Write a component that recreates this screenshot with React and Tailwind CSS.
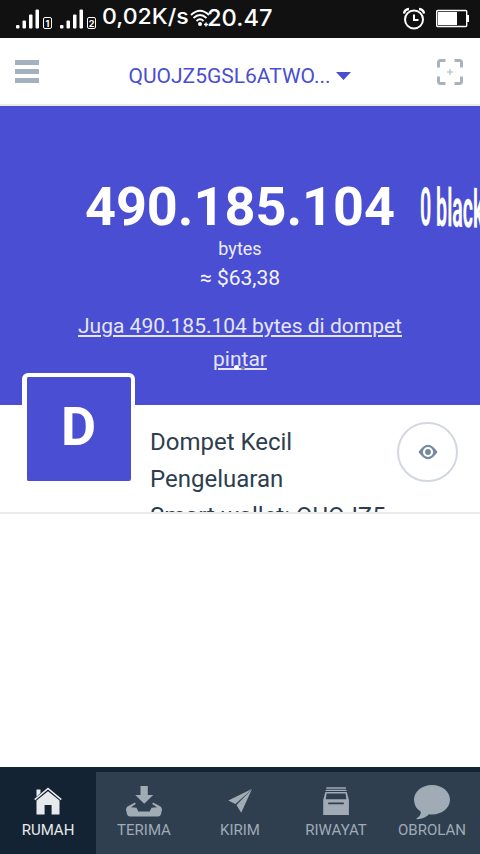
import React, { useState } from "react";

const HomeIcon = () => (
  <svg width="30" height="30" viewBox="0 0 30 30" fill="currentColor">
    <path d="M3.5 3.5h4v3.5l-4 3.8z" />
    <path d="M15 1.5 28.8 12.9 27.8 14.2 15 3.6 2.2 14.2 1.2 12.9z" />
    <path d="M15 5.2 26.5 14.6v13.9H18.6V19H11.6v9.5H3.5V14.6z" />
  </svg>
);

const ReceiveIcon = () => (
  <svg width="38" height="34" viewBox="0 0 38 34" fill="currentColor">
    <path d="M15.5 2h7.3v9h5.4L19.2 19.8 10.2 11h5.3z" />
    <path d="M10 18.6 2.5 22.5Q.9 23.8 1 26l1 4Q2.5 32.6 5 32.6H33q2.5 0 3-2.6l1-4q.1-2.2-1.5-3.5L28 18.6l-.8 1.4 4.8 3.2-5.5.5-1.8 3.8H13.3l-1.8-3.8L6 23.2 10.8 20z" />
  </svg>
);

const SendIcon = () => (
  <svg width="26" height="26" viewBox="0 0 26 26" fill="currentColor">
    <path d="M24.7 1 1.3 12.4 8.4 16.1 20.5 5.2z" />
    <path d="M24.9 1.2 9.5 17.1 14.2 24.8z" />
  </svg>
);

const HistoryIcon = () => (
  <svg width="28" height="30" viewBox="0 0 28 30" fill="currentColor">
    <path d="M4.5 1.2h19.2l.4 1.6H4.1zM3.9 3.7h20.4l.3 1.3H3.6z" />
    <path
      fillRule="evenodd"
      d="M3.4 6h21.4l2.1 8V29H1.2V14zM4.6 7.6 3.8 13.2h20.6l-.8-5.6zM6.2 16.4v1.8h15.6v-1.8z"
    />
  </svg>
);

const ChatIcon = () => (
  <svg className="mt-[2px]" width="38" height="36" viewBox="0 0 38 36" fill="currentColor">
    <path d="M19 1C29 1 37 7.5 37 15.8S29 30.5 19 30.5q-2 0-3-.2Q12 35 4 35.2 2.5 34.7 4 34q4-2.4 3.8-6.3Q1 23.5 1 15.8C1 7.5 9 1 19 1z" />
  </svg>
);

const tabs = [
  { name: "RUMAH", icon: <HomeIcon /> },
  { name: "TERIMA", icon: <ReceiveIcon /> },
  { name: "KIRIM", icon: <SendIcon /> },
  { name: "RIWAYAT", icon: <HistoryIcon /> },
  { name: "OBROLAN", icon: <ChatIcon /> },
];

const Signal = ({ sim }) => (
  <div className="flex items-end">
    <svg width="24" height="20" viewBox="0 0 24 20" fill="#fff">
      <rect x="0" y="16" width="3.5" height="3.5" rx="1" />
      <rect x="6.5" y="11.5" width="3.5" height="8" rx="1" />
      <rect x="13" y="5.5" width="3.5" height="14" rx="1" />
      <rect x="19.5" y="0.5" width="3.5" height="19" rx="1" />
    </svg>
    <span className="ml-[3px] flex h-[12px] w-[9px] items-center justify-center rounded-[2px] border border-white text-[9px] leading-none font-bold">
      {sim}
    </span>
  </div>
);

const StatusBar = () => (
  <div className="flex h-[38px] bg-[#111111] pl-4 font-[Inter,sans-serif] text-white">
    <div className="flex h-[30px] w-[86px] items-end gap-[8px] pb-[1px]">
      <Signal sim="1" />
      <Signal sim="2" />
    </div>
    <div className="h-[34px] w-[88px]">
      <span className="inline-block origin-left scale-x-[1.1] text-[21px] leading-[34px] font-medium whitespace-nowrap">
        0,02K/s
      </span>
    </div>
    <svg className="mt-[9px]" width="20" height="18" viewBox="0 0 20 18" fill="none" stroke="#fff" strokeWidth="1.8">
      <path d="M1 6Q10-2.5 19 6M3.5 9Q10 3 16.5 9M6.5 12Q10 8.5 13.5 12" />
      <circle cx="10" cy="15" r="2" fill="#fff" stroke="none" />
      <path d="M14 15.5h4M16 13.5v4" strokeWidth="1.4" />
    </svg>
    <div className="-ml-[3px] h-[36px] w-[68px]">
      <span className="inline-block origin-left scale-x-[1.03] text-[23px] leading-[36px] font-medium whitespace-nowrap">
        20.47
      </span>
    </div>
    <div className="ml-auto flex items-start pr-[10px]">
      <svg className="mt-[7px]" width="24" height="23" viewBox="0 0 24 23" fill="none" stroke="#fff" strokeWidth="2">
        <circle cx="11" cy="12.5" r="9" />
        <path d="M11 7.5v5.5h4.5" />
        <path d="M1 6.5Q1.5 2.5 6 2M21 6.5Q20.5 2.5 16 2" strokeWidth="2.4" />
      </svg>
      <svg className="mt-[9px] ml-[9px]" width="34" height="19" viewBox="0 0 34 19">
        <rect x="0.7" y="1.5" width="30" height="16" rx="1" fill="none" stroke="#fff" strokeWidth="1.4" />
        <rect x="2" y="3" width="19" height="13" fill="#fff" />
        <rect x="31" y="6" width="2" height="7" fill="#fff" />
      </svg>
    </div>
  </div>
);

const Header = () => (
  <header className="flex h-[68px] justify-between border-b-2 border-[#ebebeb] bg-white pr-[16px] pl-[15px]">
    <button className="mt-[22px] flex h-6 w-6 flex-col gap-[4px]">
      <span className="h-[5px] w-6 bg-[#a4b1be]"></span>
      <span className="h-[5px] w-6 bg-[#a4b1be]"></span>
      <span className="h-[5px] w-6 bg-[#a4b1be]"></span>
    </button>
    <button className="mt-[23px] ml-[4px] flex h-[30px] items-center text-[21px] leading-[30px] text-[#494ed3]">
      QUOJZ5GSL6ATWO...
      <svg className="ml-[5px]" width="15" height="8" viewBox="0 0 15 8" fill="currentColor">
        <path d="M0 0h15L7.5 8z" />
      </svg>
    </button>
    <svg className="mt-[20px]" width="28" height="28" viewBox="0 0 28 28" fill="none" stroke="#a7b4c0" strokeWidth="3">
      <path d="M2.5 9.5v-5q0-2 2-2h5M18.5 2.5h5q2 0 2 2v5M25.5 18.5v5q0 2-2 2h-5M9.5 25.5h-5q-2 0-2-2v-5" />
      <path d="M14 11v6M11 14h6" strokeWidth="1" />
    </svg>
  </header>
);

const Balance = () => (
  <section className="relative h-[299px] overflow-hidden bg-[#494ed3] pt-[74px] text-center text-white">
    <div className="text-[54px] leading-[54px] font-bold">490.185.104</div>
    <div className="mt-[3px] text-[18px] leading-6 text-[#ececfa]">bytes</div>
    <div className="mt-[2px] text-[21px] leading-[30px] text-[#f4f4fd]">≈ $63,38</div>
    <a className="mx-auto mt-[17px] block w-[340px] text-[21px] leading-[33px] text-[#e4e5f8] underline">
      Juga 490.185.104 bytes di dompet pintar
    </a>
    {/* next slide peeking in from the right */}
    <div className="absolute top-[75px] left-[420px] origin-left skew-y-[1deg] scale-x-[0.37] text-[53px] leading-[53px] font-bold whitespace-nowrap">
      0 blackbytes
    </div>
    <span className="absolute top-[260px] left-[241px] h-[4px] w-[4px] rounded-full bg-[#8285a5]"></span>
    <span className="absolute top-[259px] left-[234px] h-[5px] w-[5px] rounded-full bg-white"></span>
  </section>
);

const WalletCard = () => (
  <section className="flex h-[109px] border-b-2 border-[#ebebec] bg-white pl-[22px] text-[#2d3e50]">
    <div className="relative -mt-[32px] flex h-[112px] w-[113px] items-center justify-center rounded-[6px] border-4 border-l-5 border-white bg-[#494ed3] pr-[1px] pb-[5px] text-[54px] leading-none font-bold text-white">
      D
    </div>
    <div className="ml-[15px] h-[107px] w-[240px] overflow-hidden pt-[19px] text-[24px] leading-[37px]">
      <p>Dompet Kecil</p>
      <p>Pengeluaran</p>
      <p className="whitespace-nowrap">Smart wallet: QUOJZ5</p>
    </div>
    <button className="mt-[17px] ml-[7px] flex h-[60px] w-[61px] items-center justify-center rounded-full border-2 border-[#d3d8df] text-[#7488a0]">
      <svg width="20" height="16" viewBox="0 0 20 16" fill="none" stroke="currentColor">
        <path d="M1 8Q5.5 1.3 10 1.3T19 8Q14.5 14.7 10 14.7T1 8z" fill="currentColor" />
        <circle cx="10" cy="8" r="4" fill="currentColor" stroke="#fff" strokeWidth="2.2" />
      </svg>
    </button>
  </section>
);

const TabBar = () => {
  const [active, setActive] = useState("RUMAH");
  const tabOn =
    "flex flex-1 flex-col items-center bg-[#142333] text-[#e7eaed]";
  const tabOff =
    "flex flex-1 flex-col items-center bg-[#2f3f50] text-[#a0abb5]";
  return (
    <nav className="flex h-[87px] border-t-[5px] border-[#142333]">
      {tabs.map((tab) => (
        <button
          key={tab.name}
          onClick={() => setActive(tab.name)}
          className={active === tab.name ? tabOn : tabOff}
        >
          <span className="mt-[11px] flex h-[36px] items-center">{tab.icon}</span>
          <span className="mt-[1px] text-[15px] leading-5">{tab.name}</span>
        </button>
      ))}
    </nav>
  );
};

const App = () => {
  return (
    <div className="flex h-[854px] w-[480px] flex-col overflow-hidden bg-white font-[Roboto,sans-serif]">
      <StatusBar />
      <Header />
      <Balance />
      <WalletCard />
      <main className="flex-1"></main>
      <TabBar />
    </div>
  );
};

export default App;
